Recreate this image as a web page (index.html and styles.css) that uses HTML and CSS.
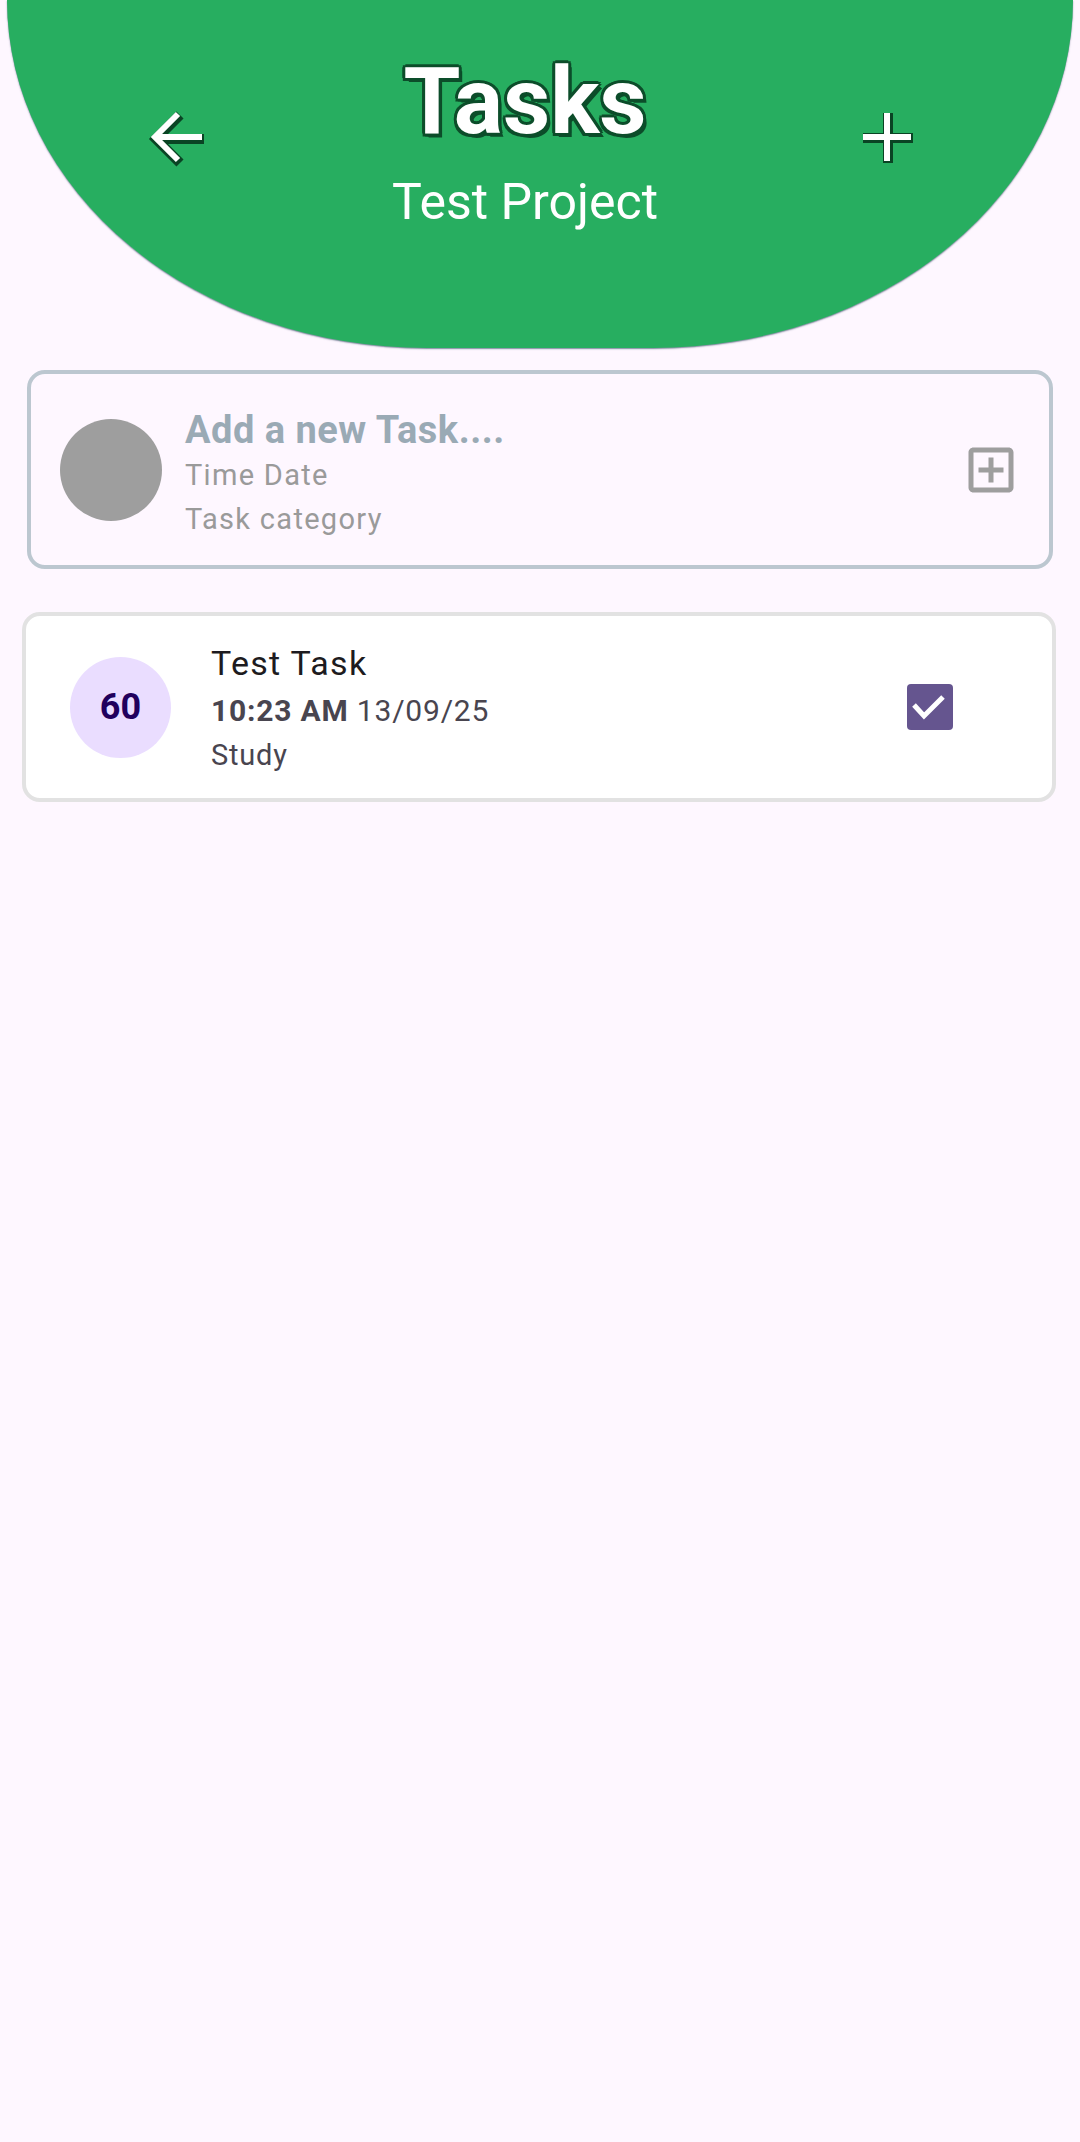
FILE: index.html
```html
<!DOCTYPE html>
<html lang="en">
<head>
<meta charset="utf-8">
<title>Tasks</title>
<link rel="stylesheet" href="styles.css">
</head>
<body>
<header class="hero">
  <div class="hero-row">
    <button class="hero-btn back" aria-label="Back">
      <svg width="60" height="60" viewBox="0 0 60 60">
        <g fill="none" stroke="#0a4424" stroke-width="10" transform="translate(2 2)">
          <path d="M7 30H55M31 6L7 30L31 54"/>
        </g>
        <g fill="none" stroke="#ffffff" stroke-width="6">
          <path d="M8 30H55M31 7L8 30L31 53"/>
        </g>
      </svg>
    </button>
    <div class="hero-titles">
      <h1 class="hero-title">Tasks</h1>
      <p class="hero-sub">Test Project</p>
    </div>
    <button class="hero-btn add" aria-label="Add">
      <svg width="60" height="60" viewBox="0 0 60 60">
        <g fill="none" stroke="#0a4424" stroke-width="10" transform="translate(1 1)">
          <path d="M5 30H55M30 5V55"/>
        </g>
        <g fill="none" stroke="#ffffff" stroke-width="6">
          <path d="M6 30H54M30 6V54"/>
        </g>
      </svg>
    </button>
  </div>
</header>

<main class="content">
  <section class="card new-task">
    <div class="avatar gray"></div>
    <div class="card-text">
      <div class="new-title">Add a new Task....</div>
      <div class="new-meta">Time Date</div>
      <div class="new-meta">Task category</div>
    </div>
    <svg class="addbox" width="60" height="60" viewBox="0 0 24 24">
      <path fill="#9e9e9e" d="M19 3H5c-1.11 0-2 .9-2 2v14c0 1.1.89 2 2 2h14c1.1 0 2-.9 2-2V5c0-1.1-.9-2-2-2zm0 16H5V5h14v14zm-8-2h2v-4h4v-2h-4V7h-2v4H7v2h4z"/>
    </svg>
  </section>

  <section class="card task">
    <div class="avatar score">60</div>
    <div class="card-text">
      <div class="task-title">Test Task</div>
      <div class="task-when"><strong>10:23 AM</strong> 13/09/25</div>
      <div class="task-cat">Study</div>
    </div>
    <svg class="check" width="46" height="46" viewBox="0 0 46 46">
      <rect x="0" y="0" width="46" height="46" rx="4" fill="#65558f"/>
      <path d="M7 21L17 32L36 13" fill="none" stroke="#ffffff" stroke-width="5"/>
    </svg>
  </section>
</main>
</body>
</html>
```

FILE: styles.css
```css
* { box-sizing: border-box; }

html, body {
  margin: 0;
  padding: 0;
}

body {
  background: #fef7ff;
  font-family: Roboto, "Noto Sans", "Liberation Sans", sans-serif;
  width: 1080px;
  min-height: 2142px;
}

.hero {
  margin: 0 7px;
  height: 348px;
  background: #27ae60;
  border-radius: 0 0 420px 420px / 0 0 348px 348px;
  box-shadow: 0 1px 1.5px rgba(40, 60, 90, 0.6);
  padding-top: 56px;
}

.hero-row {
  display: flex;
  align-items: flex-start;
  padding-left: 140px;
}

.hero-btn {
  width: 60px;
  height: 60px;
  padding: 0;
  margin: 51px 0 0 0;
  border: 0;
  background: none;
  display: block;
}

.hero-btn svg { display: block; }

.hero-titles {
  width: 420px;
  margin-left: 108px;
  margin-right: 122px;
  text-align: center;
  color: #ffffff;
}

.hero-title {
  margin: 0;
  font-size: 92px;
  line-height: 92px;
  font-weight: 700;
  letter-spacing: 0;
  text-shadow:
    -2.5px -2.5px 0 #0c4d2a, 2.5px -2.5px 0 #0c4d2a,
    -2.5px 2.5px 0 #0c4d2a, 2.5px 2.5px 0 #0c4d2a,
    0 -3px 0 #0c4d2a, 0 3px 0 #0c4d2a,
    -3px 0 0 #0c4d2a, 3px 0 0 #0c4d2a,
    3.5px 3.5px 0 #0c4d2a;
}

.hero-sub {
  margin: 24px 0 0 0;
  font-size: 50px;
  line-height: 60px;
  font-weight: 400;
}

.content {
  padding-top: 22px;
}

.card {
  display: flex;
  align-items: center;
  border-radius: 18px;
}

.new-task {
  margin: 0 27px 0 27px;
  height: 199px;
  border: 4px solid #bcc7d0;
  padding: 0 28px 0 29px;
}

.task {
  margin: 43px 24px 0 22px;
  height: 190px;
  border: 4px solid #e2e2e2;
  background: #ffffff;
  padding: 0 0 0 44px;
}

.avatar {
  flex: none;
  width: 102px;
  height: 102px;
  border-radius: 50%;
}

.avatar.gray { background: #9e9e9e; }

.avatar.score {
  width: 101px;
  height: 101px;
  background: #eaddff;
  color: #21005d;
  font-size: 36px;
  font-weight: 700;
  display: flex;
  align-items: center;
  justify-content: center;
}

.card-text {
  flex: 1;
  min-width: 0;
}

.new-task .card-text {
  margin-left: 23px;
  margin-top: 9px;
}

.new-title {
  font-size: 38px;
  line-height: 46px;
  font-weight: 700;
  color: #9aaab5;
  letter-spacing: 0.5px;
}

.new-meta {
  font-size: 29px;
  line-height: 44px;
  color: #9a9a9a;
  letter-spacing: 1.3px;
}

.new-meta:first-of-type { margin-top: 8px; }

.addbox { flex: none; display: block; }

.task .card-text { margin-left: 40px; margin-top: 2px; }

.task-title {
  font-size: 34px;
  line-height: 44px;
  color: #1d1b20;
  letter-spacing: 1.3px;
}

.task-when {
  margin-top: 4px;
  font-size: 30px;
  line-height: 44px;
  color: #49454f;
  letter-spacing: 0.8px;
}

.task-when strong { font-weight: 700; }

.task-cat {
  margin-top: 2px;
  font-size: 29px;
  line-height: 40px;
  color: #49454f;
  letter-spacing: 0.8px;
}

.check {
  flex: none;
  display: block;
  margin-right: 99px;
}
```
